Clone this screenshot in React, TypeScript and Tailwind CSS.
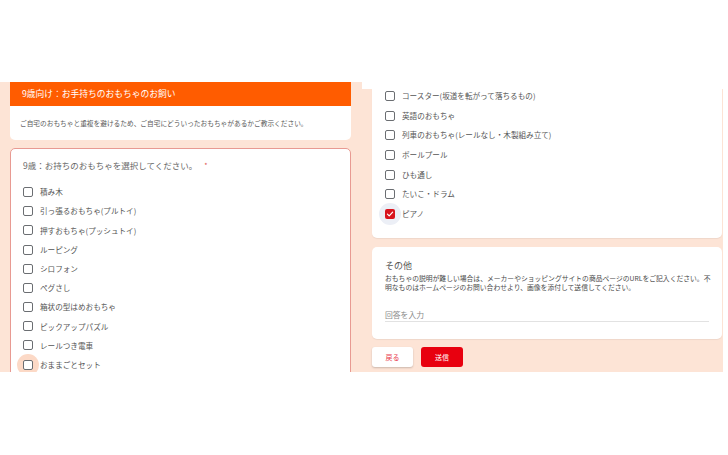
import React from "react";

const font = { fontFamily: '"Noto Sans CJK JP", "Noto Sans", sans-serif' };

function Box({ checked, halo }: { checked?: boolean; halo?: "peach" | "blue" }) {
  const box = checked ? (
    <span className="w-[10px] h-[10px] rounded-[2px] bg-[#d8141e] flex items-center justify-center shrink-0">
      <svg width="8" height="8" viewBox="0 0 10 10">
        <path d="M1.8 5.2 L4 7.3 L8.3 2.6" fill="none" stroke="#fff" strokeWidth="1.5" strokeLinecap="round" strokeLinejoin="round" />
      </svg>
    </span>
  ) : (
    <span className="w-[10px] h-[10px] rounded-[2px] border-[1.4px] border-[#6b6e72] bg-white shrink-0" />
  );
  if (halo) {
    return (
      <span
        className={
          "w-[22px] h-[22px] -m-[6px] rounded-full flex items-center justify-center shrink-0 " +
          (halo === "peach" ? "bg-[#fcd9c6]" : "bg-[#eceff6]")
        }
      >
        {box}
      </span>
    );
  }
  return box;
}

function Item({ label, checked, halo, h }: { label: string; checked?: boolean; halo?: "peach" | "blue"; h: string }) {
  return (
    <div className={"flex items-center gap-[7px] " + h}>
      <Box checked={checked} halo={halo} />
      <span className="text-[7.6px] leading-none text-[#555] whitespace-nowrap">{label}</span>
    </div>
  );
}

const leftItems = [
  "積み木",
  "引っ張るおもちゃ(プルトイ)",
  "押すおもちゃ(プッシュトイ)",
  "ルーピング",
  "シロフォン",
  "ペグさし",
  "箱状の型はめおもちゃ",
  "ピックアップパズル",
  "レールつき電車",
  "おままごとセット",
];

const rightItems = [
  "コースター(坂道を転がって落ちるもの)",
  "英語のおもちゃ",
  "列車のおもちゃ(レールなし・木製組み立て)",
  "ボールプール",
  "ひも通し",
  "たいこ・ドラム",
  "ピアノ",
];

export default function App() {
  return (
    <div className="w-[728px] h-[455px] bg-white flex items-start pt-[82px] overflow-hidden" style={font}>
      {/* Left screenshot */}
      <div className="w-[362px] h-[290px] bg-[#fde4d6] pl-[10px] pr-[11px] flex flex-col overflow-hidden shrink-0">
        <div className="h-[24px] bg-[#ff5c00] flex items-center pl-[12px] shrink-0">
          <span className="text-[8.75px] leading-none text-white">9歳向け：お手持ちのおもちゃのお飼い</span>
        </div>
        <div className="h-[34px] bg-white rounded-b-[5px] flex items-center pl-[10px] shrink-0">
          <span className="text-[6.7px] leading-none text-[#5a5a5a] whitespace-nowrap">
            ご自宅のおもちゃと重複を避けるため、ご自宅にどういったおもちゃがあるかご教示ください。
          </span>
        </div>
        <div className="mt-[8px] bg-white border border-[#e89a92] rounded-t-[5px] pt-[10px] px-[12px] flex flex-col shrink-0">
          <div className="h-[12px] flex items-center gap-[7px]">
            <span className="text-[8.5px] leading-none text-[#666] whitespace-nowrap">9歳：お持ちのおもちゃを選択してください。</span>
            <span className="text-[7px] leading-none text-[#e0534a]">*</span>
          </div>
          <div className="mt-[11.4px] flex flex-col">
            {leftItems.map((l, i) => (
              <Item key={l} label={l} h="h-[19.2px]" halo={i === leftItems.length - 1 ? "peach" : undefined} />
            ))}
          </div>
        </div>
      </div>

      {/* Right screenshot */}
      <div className="w-[361px] h-[283px] mt-[7px] bg-[#fde4d6] pl-[10px] pr-[1px] flex flex-col overflow-hidden shrink-0">
        <div className="h-[149px] bg-white rounded-b-[5px] px-[13px] flex flex-col shrink-0 shadow-[0_1px_1px_rgba(0,0,0,0.06)]">
          <div className="-mt-[3px] flex flex-col">
            {rightItems.map((l, i) => (
              <Item
                key={l}
                label={l}
                h="h-[19.7px]"
                checked={i === rightItems.length - 1}
                halo={i === rightItems.length - 1 ? "blue" : undefined}
              />
            ))}
          </div>
        </div>
        <div className="mt-[9px] h-[92px] bg-white rounded-[5px] px-[13px] pt-[12px] flex flex-col shrink-0 shadow-[0_1px_1px_rgba(0,0,0,0.06)]">
          <div className="h-[12px] flex items-center">
            <span className="text-[9px] leading-none text-[#555]">その他</span>
          </div>
          <div className="mt-[2.5px] text-[6.8px] leading-[9px] text-[#4a4a4a] whitespace-nowrap">
            おもちゃの説明が難しい場合は、メーカーやショッピングサイトの商品ページのURLをご記入ください。不
            <br />
            明なものはホームページのお問い合わせより、画像を添付して送信してください。
          </div>
          <div className="mt-[17.5px] h-[13px] border-b border-[#e2e2e2] flex items-center">
            <span className="text-[7.8px] leading-none text-[#8a8a8a]">回答を入力</span>
          </div>
        </div>
        <div className="mt-[8px] flex gap-[8px] shrink-0">
          <div className="w-[41px] h-[20px] bg-white rounded-[3px] shadow-[0_1px_2px_rgba(0,0,0,0.2)] flex items-center justify-center">
            <span className="text-[7px] leading-none text-[#e8384a]">戻る</span>
          </div>
          <div className="w-[42px] h-[20px] bg-[#e8000f] rounded-[3px] flex items-center justify-center">
            <span className="text-[7px] leading-none text-white">送信</span>
          </div>
        </div>
      </div>
    </div>
  );
}
